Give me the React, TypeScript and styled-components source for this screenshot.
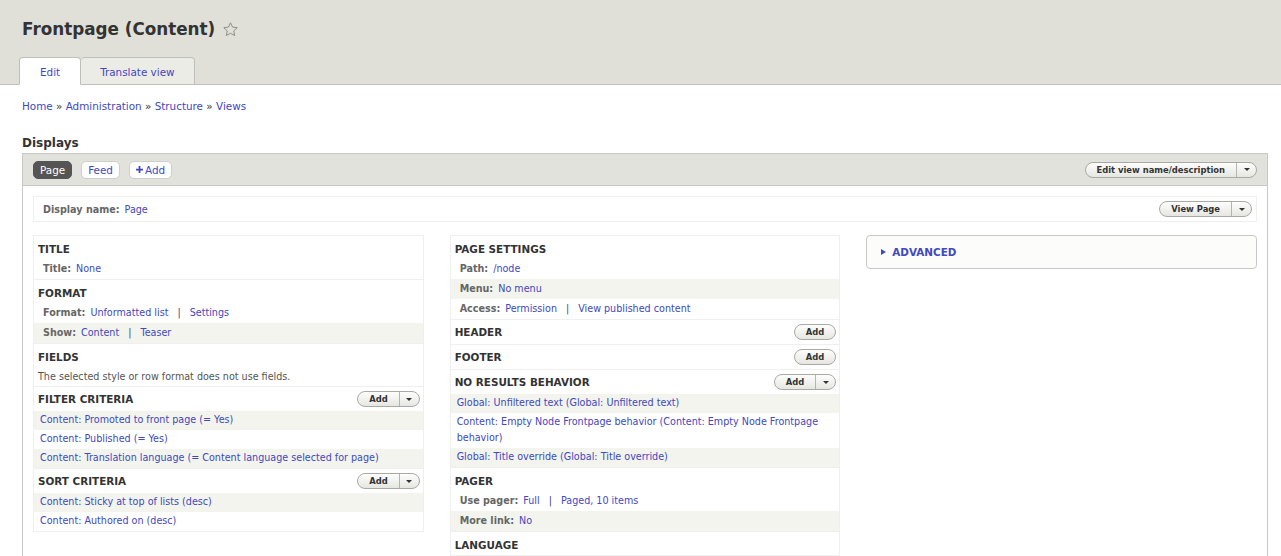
import { Fragment } from "react";
import styled, { createGlobalStyle } from "styled-components";

const LINK = "#4148c0";

type Setting = { kind: "setting"; label: string; values: string[] };
type LinkRow = { kind: "link"; text: string };
type TextRow = { kind: "text"; text: string };
type Item = Setting | LinkRow | TextRow;

type Bucket = {
  title: string;
  button?: "add" | "split";
  items: Item[];
};

const leftColumn: Bucket[] = [
  { title: "Title", items: [{ kind: "setting", label: "Title:", values: ["None"] }] },
  {
    title: "Format",
    items: [
      { kind: "setting", label: "Format:", values: ["Unformatted list", "Settings"] },
      { kind: "setting", label: "Show:", values: ["Content", "Teaser"] },
    ],
  },
  {
    title: "Fields",
    items: [{ kind: "text", text: "The selected style or row format does not use fields." }],
  },
  {
    title: "Filter criteria",
    button: "split",
    items: [
      { kind: "link", text: "Content: Promoted to front page (= Yes)" },
      { kind: "link", text: "Content: Published (= Yes)" },
      { kind: "link", text: "Content: Translation language (= Content language selected for page)" },
    ],
  },
  {
    title: "Sort criteria",
    button: "split",
    items: [
      { kind: "link", text: "Content: Sticky at top of lists (desc)" },
      { kind: "link", text: "Content: Authored on (desc)" },
    ],
  },
];

const middleColumn: Bucket[] = [
  {
    title: "Page settings",
    items: [
      { kind: "setting", label: "Path:", values: ["/node"] },
      { kind: "setting", label: "Menu:", values: ["No menu"] },
      { kind: "setting", label: "Access:", values: ["Permission", "View published content"] },
    ],
  },
  { title: "Header", button: "add", items: [] },
  { title: "Footer", button: "add", items: [] },
  {
    title: "No results behavior",
    button: "split",
    items: [
      { kind: "link", text: "Global: Unfiltered text (Global: Unfiltered text)" },
      { kind: "link", text: "Content: Empty Node Frontpage behavior (Content: Empty Node Frontpage behavior)" },
      { kind: "link", text: "Global: Title override (Global: Title override)" },
    ],
  },
  {
    title: "Pager",
    items: [
      { kind: "setting", label: "Use pager:", values: ["Full", "Paged, 10 items"] },
      { kind: "setting", label: "More link:", values: ["No"] },
    ],
  },
  { title: "Language", items: [] },
];

const GlobalStyle = createGlobalStyle`
  html, body {
    margin: 0;
    overflow: hidden;
  }
  body {
    background: #fff;
    color: #333;
    font-family: "DejaVu Sans", Verdana, sans-serif;
  }
  a {
    color: ${LINK};
    text-decoration: none;
  }
`;

const PageHeader = styled.header`
  background: #e0e0d8;
  border-bottom: 1px solid #bfbfba;
  padding: 15px 22px 0;
`;

const TitleRow = styled.div`
  display: flex;
  align-items: center;
  gap: 7px;
  height: 28px;
`;

const PageTitle = styled.h1`
  margin: 0;
  font-size: 16.8px;
  line-height: 28px;
  font-weight: bold;
  color: #333;
`;

const Tabs = styled.nav`
  display: flex;
  margin: 14px 0 -1px -3px;
`;

const Tab = styled.a<{ $active?: boolean }>`
  display: flex;
  align-items: center;
  height: 25px;
  padding: 1px 20px 0;
  font-size: 10.4px;
  border: 1px solid #bfbfba;
  border-bottom-color: ${(p) => (p.$active ? "#fff" : "#bfbfba")};
  border-radius: 4px 4px 0 0;
  background: ${(p) => (p.$active ? "#fff" : "#ecece6")};
  & + & {
    border-left: none;
    padding: 1px 19px 0;
  }
`;

const Main = styled.main`
  padding: 14px 13px 0 22px;
`;

const Breadcrumb = styled.div`
  font-size: 10.4px;
  line-height: 14px;
  color: #333;
`;

const Heading = styled.h2`
  margin: 22px 0 2px;
  font-size: 12px;
  line-height: 16px;
  font-weight: bold;
`;

const Panel = styled.section`
  border: 1px solid #c8c8c4;
  border-bottom: none;
`;

const DisplayBar = styled.div`
  display: flex;
  align-items: center;
  justify-content: space-between;
  height: 31px;
  padding: 0 10px;
  background: #e1e2dc;
  border-bottom: 1px solid #c8c8c4;
`;

const DisplayTabs = styled.div`
  display: flex;
  gap: 9px;
`;

const Pill = styled.a<{ $active?: boolean }>`
  display: inline-flex;
  align-items: center;
  gap: 2px;
  height: 16px;
  padding: 0 6px;
  font-size: 10.4px;
  border-radius: 5px;
  border: 1px solid ${(p) => (p.$active ? "#555" : "#cfcfcb")};
  background: ${(p) => (p.$active ? "#555" : "#fff")};
  color: ${(p) => (p.$active ? "#fff" : LINK)};
`;

const PanelBody = styled.div`
  padding: 10px 10px 0;
`;

const DisplayName = styled.div`
  display: flex;
  align-items: center;
  justify-content: space-between;
  height: 24px;
  padding: 0 4px 0 9px;
  border: 1px solid #efefef;
  font-size: 9.6px;
`;

const Label = styled.span`
  font-weight: bold;
  color: #666;
  margin-right: 5px;
`;

const Columns = styled.div`
  display: grid;
  grid-template-columns: repeat(3, 1fr);
  column-gap: 26px;
  margin-top: 13px;
  align-items: start;
`;

const Column = styled.div`
  border: 1px solid #efefef;
`;

const Section = styled.div`
  & + & {
    border-top: 1px solid #efefef;
  }
`;

const SectionHead = styled.div<{ $tool?: boolean }>`
  display: flex;
  align-items: center;
  justify-content: space-between;
  height: ${(p) => (p.$tool ? "24px" : "18px")};
  padding: ${(p) => (p.$tool ? "0 3px 0 4px" : "4px 4px 1px")};
`;

const SectionTitle = styled.h3`
  margin: 0;
  font-size: 10.4px;
  font-weight: bold;
  text-transform: uppercase;
  color: #333;
`;

const SettingRow = styled.div<{ $alt?: boolean }>`
  height: 20px;
  line-height: 20px;
  padding: 0 9px;
  font-size: 9.6px;
  background: ${(p) => (p.$alt ? "#f3f4ee" : "transparent")};
  white-space: nowrap;
`;

const LinkItem = styled.div<{ $alt?: boolean }>`
  padding: 1px 6px 2px;
  line-height: 16px;
  font-size: 9.6px;
  background: ${(p) => (p.$alt ? "#f3f4ee" : "transparent")};
`;

const Note = styled.div`
  padding: 0 4px;
  line-height: 19px;
  font-size: 9.6px;
  color: #555;
`;

const Pipe = styled.span`
  margin: 0 9px;
  color: #3b3f7a;
`;

const Drop = styled.span`
  display: inline-flex;
  align-items: stretch;
  height: 14px;
  border: 1px solid #a9a9a5;
  border-radius: 8px;
  background: linear-gradient(#fdfdfc, #e6e6e1);
  font-size: 8.4px;
  font-weight: bold;
  color: #333;
  line-height: 14px;
`;

const DropMain = styled.span`
  padding: 0 11px;
`;

const DropToggle = styled.span`
  display: flex;
  align-items: center;
  justify-content: center;
  width: 19px;
  border-left: 1px solid #b4b4b0;
`;

const Caret = styled.span`
  width: 0;
  height: 0;
  border-left: 3px solid transparent;
  border-right: 3px solid transparent;
  border-top: 3px solid #333;
`;

const Advanced = styled.div`
  display: flex;
  align-items: center;
  gap: 6px;
  height: 32px;
  padding: 0 14px;
  border: 1px solid #c8c8c4;
  border-radius: 4px;
  background: #fcfcfa;
`;

const AdvancedLink = styled.a`
  font-size: 10.4px;
  font-weight: bold;
`;

const Triangle = styled.span`
  width: 0;
  height: 0;
  border-top: 3px solid transparent;
  border-bottom: 3px solid transparent;
  border-left: 5px solid ${LINK};
`;

function DropButton({ label, split }: { label: string; split?: boolean }) {
  return (
    <Drop>
      <DropMain>{label}</DropMain>
      {split && (
        <DropToggle>
          <Caret />
        </DropToggle>
      )}
    </Drop>
  );
}

function Star() {
  return (
    <svg width="17" height="17" viewBox="0 0 24 24" fill="none" stroke="#8e8e84" strokeWidth="1.4" strokeLinejoin="round">
      <path d="M12 2.5l2.9 6.1 6.6.8-4.9 4.6 1.3 6.6L12 17.3l-5.9 3.3 1.3-6.6-4.9-4.6 6.6-.8z" />
    </svg>
  );
}

function Plus() {
  return (
    <svg width="7" height="7" viewBox="0 0 8 8">
      <path d="M3 0h2v3h3v2H5v3H3V5H0V3h3z" fill={LINK} />
    </svg>
  );
}

function Values({ values }: { values: string[] }) {
  return (
    <>
      {values.map((v, i) => (
        <Fragment key={v}>
          {i > 0 && <Pipe>|</Pipe>}
          <a href="#">{v}</a>
        </Fragment>
      ))}
    </>
  );
}

function BucketView({ bucket }: { bucket: Bucket }) {
  let settingIndex = 0;
  let linkIndex = 0;
  return (
    <Section>
      <SectionHead $tool={!!bucket.button}>
        <SectionTitle>{bucket.title}</SectionTitle>
        {bucket.button && <DropButton label="Add" split={bucket.button === "split"} />}
      </SectionHead>
      {bucket.items.map((item, i) => {
        if (item.kind === "setting") {
          const alt = settingIndex++ % 2 === 1;
          return (
            <SettingRow key={i} $alt={alt}>
              <Label>{item.label}</Label>
              <Values values={item.values} />
            </SettingRow>
          );
        }
        if (item.kind === "link") {
          const alt = linkIndex++ % 2 === 0;
          return (
            <LinkItem key={i} $alt={alt}>
              <a href="#">{item.text}</a>
            </LinkItem>
          );
        }
        return <Note key={i}>{item.text}</Note>;
      })}
    </Section>
  );
}

export default function App() {
  return (
    <>
      <GlobalStyle />
      <PageHeader>
        <TitleRow>
          <PageTitle>Frontpage (Content)</PageTitle>
          <Star />
        </TitleRow>
        <Tabs>
          <Tab href="#" $active>
            Edit
          </Tab>
          <Tab href="#">Translate view</Tab>
        </Tabs>
      </PageHeader>
      <Main>
        <Breadcrumb>
          <a href="#">Home</a> » <a href="#">Administration</a> » <a href="#">Structure</a> »{" "}
          <a href="#">Views</a>
        </Breadcrumb>
        <Heading>Displays</Heading>
        <Panel>
          <DisplayBar>
            <DisplayTabs>
              <Pill href="#" $active>
                Page
              </Pill>
              <Pill href="#">Feed</Pill>
              <Pill href="#">
                <Plus />
                Add
              </Pill>
            </DisplayTabs>
            <DropButton label="Edit view name/description" split />
          </DisplayBar>
          <PanelBody>
            <DisplayName>
              <span>
                <Label>Display name:</Label>
                <a href="#">Page</a>
              </span>
              <DropButton label="View Page" split />
            </DisplayName>
            <Columns>
              <Column>
                {leftColumn.map((b) => (
                  <BucketView key={b.title} bucket={b} />
                ))}
              </Column>
              <Column>
                {middleColumn.map((b) => (
                  <BucketView key={b.title} bucket={b} />
                ))}
              </Column>
              <Advanced>
                <Triangle />
                <AdvancedLink href="#">ADVANCED</AdvancedLink>
              </Advanced>
            </Columns>
          </PanelBody>
        </Panel>
      </Main>
    </>
  );
}
